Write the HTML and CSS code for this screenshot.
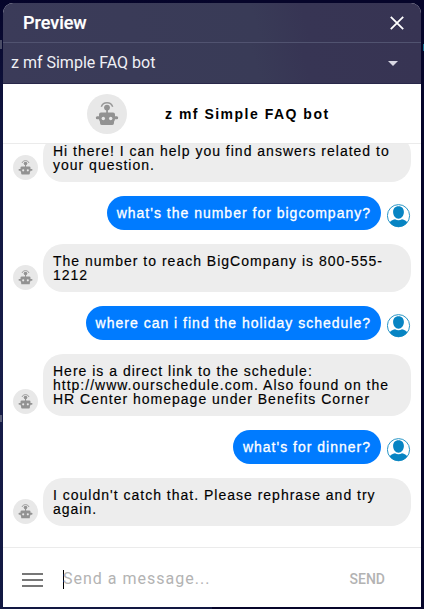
FILE: index.html
```html
<!DOCTYPE html>
<html lang="en">
<head>
<meta charset="utf-8">
<title>Preview</title>
<link rel="stylesheet" href="styles.css">
</head>
<body>
<svg class="defs" width="0" height="0">
  <symbol id="bot" viewBox="0 0 40 40">
    <circle cx="20" cy="20" r="20" fill="#e8e8e8"/>
    <g fill="#929292">
      <path d="M14.300 12.800a6.100 6.100 0 0 1 11.400 0" fill="none" stroke="#999" stroke-width="1.500"/>
      <circle cx="20" cy="13.600" r="2.900"/>
      <rect x="19.200" y="14" width="1.700" height="6"/>
      <path d="M14 18.400h12q2 0 2 2v1.800h1.800q1.400 0 1.400 1.500t-1.400 1.500H28q-.4 1.800-1 2.600v1.300q0 1.900-1.700 1.900H14.700q-1.700 0-1.700-1.900v-1.300q-.6-.8-1-2.600h-1.800q-1.400 0-1.400-1.500t1.400-1.500H12v-1.800q0-2 2-2z"/>
    </g>
    <circle cx="16.300" cy="24.500" r="1.700" fill="#e8e8e8"/>
    <circle cx="23.700" cy="24.500" r="1.700" fill="#e8e8e8"/>
  </symbol>
  <symbol id="user" viewBox="0 0 24 24">
    <circle cx="11.500" cy="11.700" r="11.100" fill="#fff" stroke="#2795c6" stroke-width="1"/>
    <path d="M11.500 2.300c3.500 0 5.400 2.300 5.400 5.700 0 3.500-2.400 6.700-5.400 6.700s-5.400-3.200-5.400-6.700c0-3.400 1.900-5.700 5.400-5.700z" fill="#0784c3"/>
    <path d="M2.800 18.600c.8-2 2.700-2.900 5.200-3.400 2.100 1.400 4.900 1.400 7 0 2.500.5 4.400 1.400 5.200 3.400-1.700 2.700-4.900 4.400-8.700 4.400s-7-1.700-8.700-4.400z" fill="#0784c3"/>
  </symbol>
</svg>
<main class="panel">
  <header class="title-bar">
    <h1>Preview</h1>
    <svg class="close" viewBox="0 0 14 14"><path d="M.8.8l12.400 12.400M13.200.8L.8 13.200"/></svg>
  </header>
  <div class="picker"><span>z mf Simple FAQ bot</span><i class="caret"></i></div>
  <div class="bot-head">
    <svg class="bot-logo"><use href="#bot"/></svg>
    <h2>z mf Simple FAQ bot</h2>
  </div>
  <section class="messages">
    <div class="row bot"><svg class="avatar"><use href="#bot"/></svg><p class="bubble">Hi there! I can help you find answers related to<br>your question.</p></div>
    <div class="row me"><p class="bubble">what's the number for bigcompany?</p><svg class="avatar"><use href="#user"/></svg></div>
    <div class="row bot"><svg class="avatar"><use href="#bot"/></svg><p class="bubble">The number to reach BigCompany is 800-555-<br>1212</p></div>
    <div class="row me"><p class="bubble">where can i find the holiday schedule?</p><svg class="avatar"><use href="#user"/></svg></div>
    <div class="row bot"><svg class="avatar"><use href="#bot"/></svg><p class="bubble">Here is a direct link to the schedule:<br>http://www.ourschedule.com. Also found on the<br>HR Center homepage under Benefits Corner</p></div>
    <div class="row me"><p class="bubble">what's for dinner?</p><svg class="avatar"><use href="#user"/></svg></div>
    <div class="row bot"><svg class="avatar"><use href="#bot"/></svg><p class="bubble">I couldn't catch that. Please rephrase and try<br>again.</p></div>
  </section>
  <footer class="composer">
    <div class="menu"><i></i><i></i><i></i></div>
    <div class="field"><span>Send a message...</span></div>
    <span class="send">SEND</span>
  </footer>
</main>
</body>
</html>
```
FILE: styles.css
```css
* { box-sizing: border-box; margin: 0; }
body {
  height: 609px;
  padding: 3px 3px 2px;
  overflow: hidden;
  background:
    linear-gradient(#4a4c66, #4a4c66) 0 40px / 2px 9px no-repeat,
    linear-gradient(#5a5e78, #5a5e78) 0 415px / 2px 7px no-repeat,
    linear-gradient(#17708f, #17708f) 423px 44px / 1px 7px no-repeat,
    linear-gradient(90deg, transparent 50%, #06052a 50%),
    linear-gradient(#05042a, #10153f 20%, #171d49 60%, #121842);
  font-family: "Liberation Sans", Arial, sans-serif;
}
.defs { position: absolute; }
.panel {
  display: flex;
  flex-direction: column;
  height: 604px;
  background: #fff;
  border-radius: 10px 10px 0 0;
  overflow: hidden;
}
.title-bar, .picker {
  flex: none;
  display: flex;
  align-items: center;
  justify-content: space-between;
  color: #fff;
  font-family: Roboto, sans-serif;
  background: linear-gradient(75deg, #3b3b59 0%, #393b57 60%, #373554 72%, #373453 100%);
}
.title-bar { height: 40px; padding: 1px 17px 0 20px; border-bottom: 1px solid #515370; }
.title-bar h1 { font-size: 18px; font-weight: 500; line-height: 24px; -webkit-text-stroke: .2px #fff; }
.close { width: 14px; height: 14px; fill: none; stroke: #fff; stroke-width: 1.8; }
.picker { height: 41px; padding: 0 23px 1px 8px; border-bottom: 1px solid #29284a; font-size: 16px; color: #f0f0f5; }
.caret { border: 5px solid transparent; border-top-color: #d9d8e3; border-bottom: 0; margin-top: 2px; }
.bot-head { flex: none; display: flex; align-items: center; height: 60px; padding-left: 84px; border-bottom: 1px solid #ebebeb; }
.bot-logo { width: 40px; height: 40px; margin-right: 38px; }
.bot-head h2 { font-size: 14px; letter-spacing: 1.5px; white-space: nowrap; }
.bot-logo, .avatar { flex: none; }
.messages {
  flex: 1;
  min-height: 0;
  overflow: hidden;
  display: flex;
  flex-direction: column;
  justify-content: flex-end;
  gap: 14px;
  padding: 0 10px 21px;
}
.row { flex: none; display: flex; align-items: flex-end; }
.bubble { padding: 10px; border-radius: 20px; font-size: 14px; line-height: 14px; letter-spacing: 1px; white-space: nowrap; }
.bot .bubble { flex: 1; margin-left: 5px; background: #ededed; color: #000; -webkit-text-stroke: .15px #000; }
.bot .avatar { width: 25px; height: 25px; margin-bottom: 2px; }
.me { justify-content: flex-end; }
.me .bubble { background: #007bff; color: #fff; border-radius: 17px; -webkit-text-stroke: .3px #fff; }
.me .avatar { width: 24px; height: 24px; margin: 0 0 2px 6px; }
.composer { flex: none; display: flex; align-items: center; height: 60px; padding: 4px 36px 0 19px; border-top: 1px solid #ebebeb; font-family: Roboto, sans-serif; }
.menu { display: grid; gap: 4px; width: 21px; margin-right: 20px; }
.menu i { height: 2px; background: #777; }
.field { flex: 1; height: 19px; line-height: 17px; border-left: 1px solid #000; font-size: 16px; letter-spacing: 1px; color: #b3b3b3; }
.field span { margin-left: -1px; }
.send { font-size: 14px; font-weight: 500; line-height: 16px; margin-top: -1px; color: #b3b3b3; }
```
